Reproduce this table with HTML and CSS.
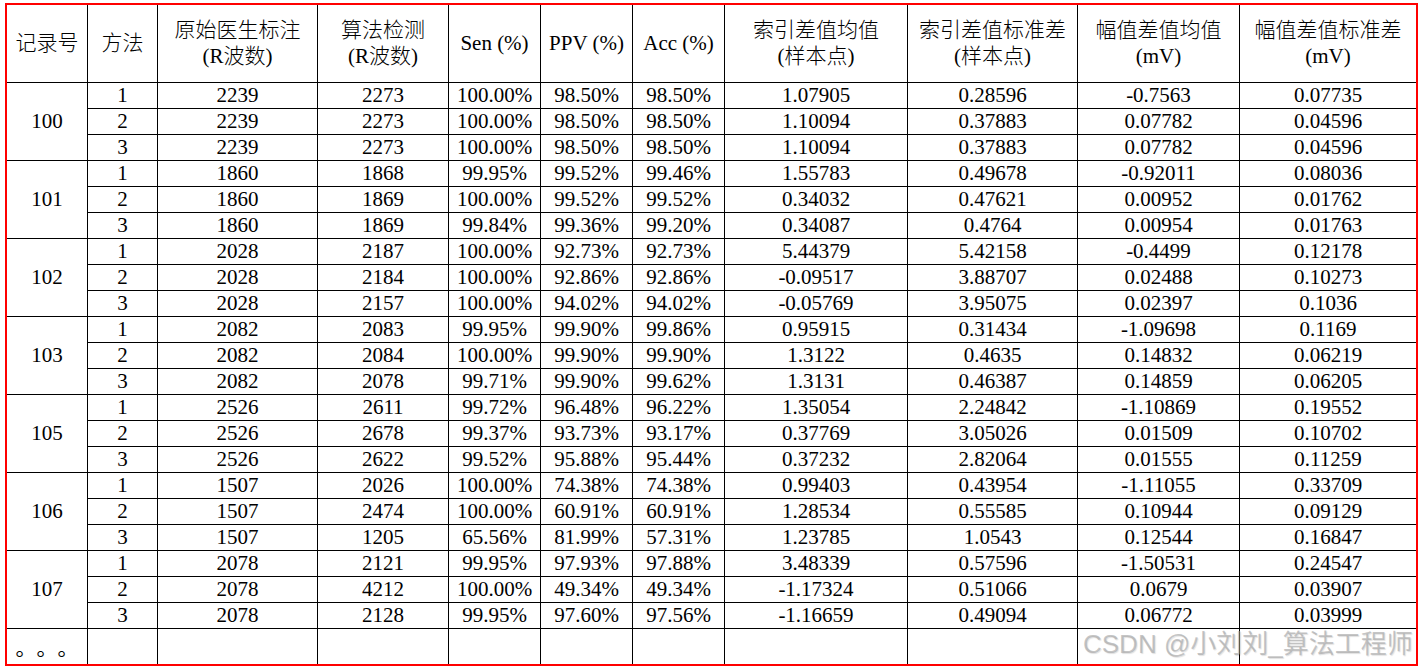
FILE: index.html
```html
<!DOCTYPE html>
<html lang="zh-CN">
<head>
<meta charset="utf-8">
<title>记录表</title>
<link rel="stylesheet" href="styles.css">
</head>
<body>
<div class="sheet">
<table class="tbl">
<colgroup>
<col class="c1"><col class="c2"><col class="c3"><col class="c4"><col class="c5"><col class="c6"><col class="c7"><col class="c8"><col class="c9"><col class="c10"><col class="c11">
</colgroup>
<thead>
<tr class="head">
<th>记录号</th><th>方法</th><th>原始医生标注<br>(R波数)</th><th>算法检测<br>(R波数)</th><th>Sen (%)</th><th>PPV (%)</th><th>Acc (%)</th><th>索引差值均值<br>(样本点)</th><th>索引差值标准差<br>(样本点)</th><th>幅值差值均值<br>(mV)</th><th>幅值差值标准差<br>(mV)</th>
</tr>
</thead>
<tbody>
<tr><td rowspan="3">100</td><td>1</td><td>2239</td><td>2273</td><td>100.00%</td><td>98.50%</td><td>98.50%</td><td>1.07905</td><td>0.28596</td><td>-0.7563</td><td>0.07735</td></tr>
<tr><td>2</td><td>2239</td><td>2273</td><td>100.00%</td><td>98.50%</td><td>98.50%</td><td>1.10094</td><td>0.37883</td><td>0.07782</td><td>0.04596</td></tr>
<tr><td>3</td><td>2239</td><td>2273</td><td>100.00%</td><td>98.50%</td><td>98.50%</td><td>1.10094</td><td>0.37883</td><td>0.07782</td><td>0.04596</td></tr>
<tr><td rowspan="3">101</td><td>1</td><td>1860</td><td>1868</td><td>99.95%</td><td>99.52%</td><td>99.46%</td><td>1.55783</td><td>0.49678</td><td>-0.92011</td><td>0.08036</td></tr>
<tr><td>2</td><td>1860</td><td>1869</td><td>100.00%</td><td>99.52%</td><td>99.52%</td><td>0.34032</td><td>0.47621</td><td>0.00952</td><td>0.01762</td></tr>
<tr><td>3</td><td>1860</td><td>1869</td><td>99.84%</td><td>99.36%</td><td>99.20%</td><td>0.34087</td><td>0.4764</td><td>0.00954</td><td>0.01763</td></tr>
<tr><td rowspan="3">102</td><td>1</td><td>2028</td><td>2187</td><td>100.00%</td><td>92.73%</td><td>92.73%</td><td>5.44379</td><td>5.42158</td><td>-0.4499</td><td>0.12178</td></tr>
<tr><td>2</td><td>2028</td><td>2184</td><td>100.00%</td><td>92.86%</td><td>92.86%</td><td>-0.09517</td><td>3.88707</td><td>0.02488</td><td>0.10273</td></tr>
<tr><td>3</td><td>2028</td><td>2157</td><td>100.00%</td><td>94.02%</td><td>94.02%</td><td>-0.05769</td><td>3.95075</td><td>0.02397</td><td>0.1036</td></tr>
<tr><td rowspan="3">103</td><td>1</td><td>2082</td><td>2083</td><td>99.95%</td><td>99.90%</td><td>99.86%</td><td>0.95915</td><td>0.31434</td><td>-1.09698</td><td>0.1169</td></tr>
<tr><td>2</td><td>2082</td><td>2084</td><td>100.00%</td><td>99.90%</td><td>99.90%</td><td>1.3122</td><td>0.4635</td><td>0.14832</td><td>0.06219</td></tr>
<tr><td>3</td><td>2082</td><td>2078</td><td>99.71%</td><td>99.90%</td><td>99.62%</td><td>1.3131</td><td>0.46387</td><td>0.14859</td><td>0.06205</td></tr>
<tr><td rowspan="3">105</td><td>1</td><td>2526</td><td>2611</td><td>99.72%</td><td>96.48%</td><td>96.22%</td><td>1.35054</td><td>2.24842</td><td>-1.10869</td><td>0.19552</td></tr>
<tr><td>2</td><td>2526</td><td>2678</td><td>99.37%</td><td>93.73%</td><td>93.17%</td><td>0.37769</td><td>3.05026</td><td>0.01509</td><td>0.10702</td></tr>
<tr><td>3</td><td>2526</td><td>2622</td><td>99.52%</td><td>95.88%</td><td>95.44%</td><td>0.37232</td><td>2.82064</td><td>0.01555</td><td>0.11259</td></tr>
<tr><td rowspan="3">106</td><td>1</td><td>1507</td><td>2026</td><td>100.00%</td><td>74.38%</td><td>74.38%</td><td>0.99403</td><td>0.43954</td><td>-1.11055</td><td>0.33709</td></tr>
<tr><td>2</td><td>1507</td><td>2474</td><td>100.00%</td><td>60.91%</td><td>60.91%</td><td>1.28534</td><td>0.55585</td><td>0.10944</td><td>0.09129</td></tr>
<tr><td>3</td><td>1507</td><td>1205</td><td>65.56%</td><td>81.99%</td><td>57.31%</td><td>1.23785</td><td>1.0543</td><td>0.12544</td><td>0.16847</td></tr>
<tr><td rowspan="3">107</td><td>1</td><td>2078</td><td>2121</td><td>99.95%</td><td>97.93%</td><td>97.88%</td><td>3.48339</td><td>0.57596</td><td>-1.50531</td><td>0.24547</td></tr>
<tr><td>2</td><td>2078</td><td>4212</td><td>100.00%</td><td>49.34%</td><td>49.34%</td><td>-1.17324</td><td>0.51066</td><td>0.0679</td><td>0.03907</td></tr>
<tr><td>3</td><td>2078</td><td>2128</td><td>99.95%</td><td>97.60%</td><td>97.56%</td><td>-1.16659</td><td>0.49094</td><td>0.06772</td><td>0.03999</td></tr>
<tr class="last"><td class="dots">。。。</td><td></td><td></td><td></td><td></td><td></td><td></td><td></td><td></td><td></td><td></td></tr>
</tbody>
</table>
<div class="watermark">CSDN @小刘刘_算法工程师</div>
</div>
</body>
</html>
```

FILE: styles.css
```css
html, body {
  margin: 0;
  padding: 0;
  background: #ffffff;
}

body {
  padding: 3px 0 0 5px;
  font-family: "Liberation Serif", "Noto Sans CJK SC", serif;
  color: #000;
}

.sheet {
  position: relative;
  width: 1413px;
}

.tbl {
  border-collapse: collapse;
  table-layout: fixed;
  width: 1413px;
  border: 2px solid #ff0000;
  font-size: 21px;
}

.c1 { width: 81.5px; }
.c2 { width: 70px; }
.c3 { width: 160px; }
.c4 { width: 131px; }
.c5 { width: 92px; }
.c6 { width: 92px; }
.c7 { width: 92px; }
.c8 { width: 183px; }
.c9 { width: 170px; }
.c10 { width: 162px; }
.c11 { width: 177.5px; }

.tbl th,
.tbl td {
  border: 1px solid #000;
  padding: 0;
  text-align: center;
  vertical-align: middle;
  font-weight: 400;
  white-space: nowrap;
  overflow: hidden;
}

.tbl th {
  line-height: 26px;
  font-weight: 300;
}

.tbl td {
  line-height: 24px;
}

.head {
  height: 78px;
}

.tbl tbody tr {
  height: 26px;
}

.tbl tbody tr.last {
  height: 37px;
}

.dots {
  font-family: "Noto Sans CJK SC", sans-serif;
  text-spacing-trim: space-all;
  font-size: 21px;
  padding-top: 4px;
}

.watermark {
  position: absolute;
  left: 1078px;
  top: 628px;
  font-family: "Liberation Sans", "Noto Sans CJK SC", sans-serif;
  font-size: 26px;
  line-height: 26px;
  color: rgba(160, 160, 160, 0.6);
  text-shadow: 1px 1px 1px rgba(0, 0, 0, 0.12);
  white-space: nowrap;
  pointer-events: none;
}
```
